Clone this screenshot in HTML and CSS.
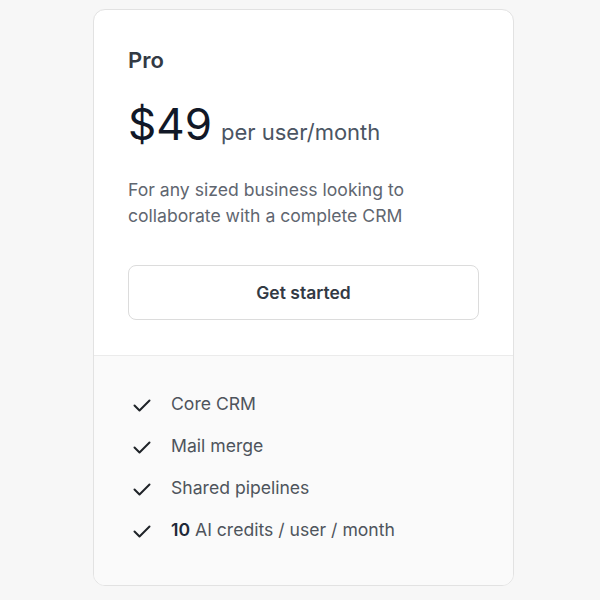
FILE: index.html
```html
<!DOCTYPE html>
<html lang="en">
<head>
  <meta charset="UTF-8">
  <title>Pricing</title>
  <link rel="stylesheet" href="styles.css">
</head>
<body>
  <div class="plan">
    <!-- plan header -->
    <div class="plan-top">
      <h3 class="plan-name">Pro</h3>
      <div class="plan-price">
        <span class="amount">$49</span>
        <span class="unit">per user/month</span>
      </div>
      <p class="plan-desc">For any sized business looking to collaborate with a complete CRM</p>
      <button class="plan-btn">Get started</button>
    </div>

    <!-- feature list -->
    <ul class="features">
      <li><svg class="check" viewBox="0 0 18 14"><path d="M1.5 7.5l5 5 10-10"/></svg>Core CRM</li>
      <li><svg class="check" viewBox="0 0 18 14"><path d="M1.5 7.5l5 5 10-10"/></svg>Mail merge</li>
      <li><svg class="check" viewBox="0 0 18 14"><path d="M1.5 7.5l5 5 10-10"/></svg>Shared pipelines</li>
      <li><svg class="check" viewBox="0 0 18 14"><path d="M1.5 7.5l5 5 10-10"/></svg><span><b>10</b> AI credits / user / month</span></li>
    </ul>
  </div>
</body>
</html>
```

FILE: styles.css
```css
body {
  margin: 0;
  padding: 9px 0 0;
  background: #f7f7f7;
  font-family: Inter, "Noto Sans", sans-serif;
}

.plan {
  width: 419px;
  margin: 0 0 0 93px;
  background: #fff;
  border: 1px solid #e2e2e2;
  border-radius: 12px;
  overflow: hidden;
}

.plan-top {
  padding: 36px 34px 35px;
  border-bottom: 1px solid #ebebeb;
}

.plan-name {
  margin: 0;
  font-size: 22px;
  line-height: 28px;
  font-weight: 600;
  color: #333a44;
}

.plan-price {
  display: flex;
  align-items: baseline;
  margin-top: 28px;
  height: 44px;
}
.amount {
  font-size: 44px;
  line-height: 44px;
  font-weight: 400;
  color: #111827;
}
.unit {
  margin-left: 9px;
  font-size: 22px;
  color: #4b5563;
}

.plan-desc {
  margin: 31px 0 0;
  font-size: 17.6px;
  line-height: 26px;
  color: #5f6670;
}

.plan-btn {
  display: block;
  width: 100%;
  height: 55px;
  margin-top: 36px;
  background: #fff;
  border: 1px solid #dcdcdc;
  border-radius: 8px;
  font-family: inherit;
  font-size: 17.5px;
  font-weight: 600;
  color: #333a44;
}

.features {
  list-style: none;
  margin: 0;
  padding: 27px 34px 34px;
  background: #fafafa;
}
.features li {
  display: flex;
  align-items: center;
  height: 42px;
  line-height: 42px;
  font-size: 17.6px;
  color: #4e545c;
}
.features b {
  font-weight: 600;
  color: #1f2937;
}
.check {
  flex: none;
  width: 18px;
  height: 14px;
  margin: 1px 20px 0 5px;
  fill: none;
  stroke: #1f2328;
  stroke-width: 2;
  stroke-linecap: round;
  stroke-linejoin: round;
}
```
